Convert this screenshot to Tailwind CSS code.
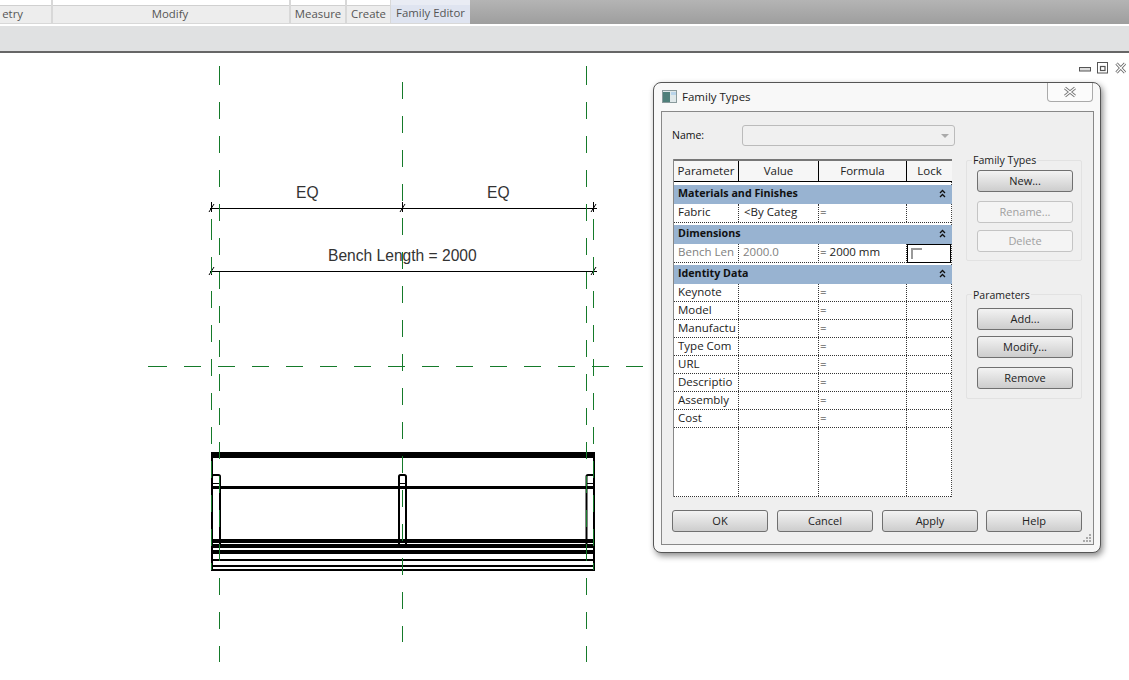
<!DOCTYPE html>
<html lang="en">
<head>
    <meta charset="UTF-8">
    <title>Family Types</title>
    <script src="https://cdn.jsdelivr.net/npm/@tailwindcss/browser@4"></script>
</head>
<body class="bg-white">
<div class="relative w-[1129px] h-[680px] overflow-hidden bg-white font-['Open_Sans',sans-serif] text-[11.5px] text-[#222]">

    <!-- Ribbon panel labels -->
    <div class="flex h-[24px] bg-gradient-to-b from-[#b4b4b4] to-[#9e9e9e] text-[11.4px] text-[#555]">
        <div class="flex gap-[1px] bg-[#d8d8d8]">
            <div class="w-[51px] h-[23px] bg-white"><div class="h-[18px] mt-[5px] pr-[28px] bg-[#ededed] border-t border-[#d0d0d0] text-right leading-[16px]">etry</div></div>
            <div class="w-[236px] h-[23px] ml-[1px] bg-white"><div class="h-[18px] mt-[5px] pr-[2px] bg-[#ededed] border-t border-[#d0d0d0] text-center leading-[16px]">Modify</div></div>
            <div class="w-[54px] h-[23px] ml-[1px] bg-white"><div class="h-[18px] mt-[5px] bg-[#ededed] border-t border-[#d0d0d0] text-center leading-[16px]">Measure</div></div>
            <div class="w-[43px] h-[23px] ml-[1px] bg-white"><div class="h-[18px] mt-[5px] bg-[#ededed] border-t border-[#d0d0d0] text-center leading-[16px]">Create</div></div>
            <div class="w-[79px] h-[23px] bg-[#e9ecf4]"><div class="h-[18px] mt-[5px] bg-[#dfe4f0] text-center leading-[16px]">Family Editor</div></div>
        </div>
    </div>
    <div class="h-[2px] bg-white"></div>
    <div class="h-[27px] bg-[#e0e1e2] border-b-2 border-[#666]"></div>

    <!-- Drawing area -->
    <svg class="absolute left-0 top-0" width="1129" height="680">
        <g stroke="#000" fill="none" shape-rendering="crispEdges">
            <path d="M210 208.5H597"/>
            <path d="M210 271.5H597"/>
        </g>
        <g stroke="#000" fill="none">
            <path d="M209 212L214 204M211.500 202V212"/>
            <path d="M400 212L405 204M402.500 202V212"/>
            <path d="M591 212L596 204M593.500 202V212"/>
            <path d="M209 275L214 267M211.500 258V275"/>
            <path d="M591 275L596 267M593.500 258V275"/>
        </g>
        <g font-family="Liberation Sans, sans-serif" font-size="15.600" fill="#333">
            <text x="296" y="198">EQ</text>
            <text x="487" y="198">EQ</text>
            <text x="328" y="261">Bench Length = 2000</text>
        </g>

        <!-- Bench -->
        <g fill="#000" shape-rendering="crispEdges">
            <rect x="211" y="452" width="384" height="6"/>
            <rect x="211" y="486" width="384" height="3"/>
            <rect x="211" y="539" width="384" height="4"/>
            <rect x="211" y="544" width="384" height="4"/>
            <rect x="211" y="550" width="384" height="4"/>
            <rect x="211" y="559" width="384" height="2"/>
            <rect x="211" y="565" width="384" height="2"/>
            <rect x="211" y="569" width="384" height="2"/>
            <rect x="211" y="452" width="2" height="119"/>
            <rect x="593" y="452" width="2" height="119"/>
            <rect x="211" y="483" width="9" height="1"/>
            <rect x="398" y="483" width="9" height="1"/>
            <rect x="586" y="483" width="8" height="1"/>
        </g>
        <g stroke="#000" stroke-width="2" fill="none">
            <path d="M212 546V476.500a1.500 1.500 0 0 1 1.500-1.500H218.500a1.500 1.500 0 0 1 1.500 1.500V546"/>
            <path d="M399 546V476.500a1.500 1.500 0 0 1 1.500-1.500H404.500a1.500 1.500 0 0 1 1.500 1.500V546"/>
            <path d="M586.500 546V476.500a1.500 1.500 0 0 1 1.500-1.500H594"/>
        </g>

        <!-- Reference planes -->
        <g stroke="#157a2a" fill="none" shape-rendering="crispEdges">
            <path d="M219.500 66V85"/>
            <path d="M586.500 66V85"/>
            <path d="M148 366.500H167"/>
            <g stroke-dasharray="17 17">
                <path d="M219.500 102V662"/>
                <path d="M586.500 102V662"/>
                <path d="M402.500 82V642"/>
                <path d="M211.500 223V570"/>
                <path d="M593.500 223V570"/>
                <path d="M184 366.500H643"/>
            </g>
            <path d="M211.500 219V223"/>
            <path d="M593.500 219V223"/>
        </g>

        <!-- Application window buttons -->
        <g fill="none" stroke="#555">
            <rect x="1079.500" y="67.500" width="11" height="3.500" fill="#ddd"/>
            <rect x="1097.500" y="62.500" width="10" height="10.500"/>
            <rect x="1100.500" y="66.500" width="4.500" height="4" stroke-width="1.200"/>
            <path d="M1116.500 63.500L1125 72.500M1125 63.500L1116.500 72.500" stroke="#666" stroke-width="3"/>
            <path d="M1116.500 63.500L1125 72.500M1125 63.500L1116.500 72.500" stroke="#fff" stroke-width="1.200"/>
        </g>
    </svg>

    <!-- Family Types dialog -->
    <div class="absolute left-[653px] top-[82px] w-[448px] h-[471px] rounded-[8px] border border-[#555] bg-[#f8f8f8] shadow-[2px_3px_6px_rgba(0,0,0,0.45)] px-[7px]">
        <!-- Title bar -->
        <div class="flex items-center h-[28px] pb-[1px]">
            <svg width="15" height="13" class="ml-[1px]">
                <rect x="0.500" y="0.500" width="14" height="12" fill="#dfe8ea" stroke="#8a9a9c"/>
                <rect x="1" y="2" width="7" height="10" fill="#4f7f7a"/>
                <rect x="9" y="2" width="5" height="3" fill="#b9d4ea"/>
            </svg>
            <span class="ml-[5px] text-[11.5px] text-[#222]">Family Types</span>
        </div>
        <div class="absolute right-[7px] top-0 flex items-center justify-center w-[46px] h-[19px] border border-t-0 border-[#aaa] rounded-b-[4px] bg-[#fbfbfb]">
            <svg width="14" height="12">
                <path d="M2 2L12 10M12 2L2 10" fill="none" stroke="#777" stroke-width="3"/>
                <path d="M2 2L12 10M12 2L2 10" fill="none" stroke="#fff" stroke-width="1.200"/>
            </svg>
        </div>

        <!-- Client area -->
        <div class="relative w-[433px] h-[434px] border border-[#888] bg-[#efefef] pl-[10px] pt-[13px]">
            <div class="flex items-center h-[21px]">
                <span class="w-[70px] text-[10.500px] text-[#111]">Name:</span>
                <div class="flex items-center justify-end w-[213px] h-[21px] pr-[5px] border border-[#bbb] rounded-[3px] bg-[#f0f0f0]">
                    <span class="w-0 h-0 border-x-[4px] border-x-transparent border-t-[4px] border-t-[#aaa]"></span>
                </div>
            </div>

            <div class="flex mt-[13px]">
                <!-- Parameter table -->
                <div class="flex flex-col ml-[1px] w-[279px] h-[338px] bg-white border-l border-r border-[#888] border-r-[#444] [border-right-style:dotted]">
                    <div class="grid grid-cols-[65px_80px_88px_45px] -mr-[1px] h-[23px] bg-[#f6f6f6] border-t-2 border-b border-t-[#777] border-b-black text-center leading-[20px]">
                        <div class="border-r border-black">Parameter</div>
                        <div class="border-r border-black">Value</div>
                        <div class="border-r border-black">Formula</div>
                        <div>Lock</div>
                    </div>

                    <div class="flex items-center justify-between -mr-[1px] mt-[3px] h-[19px] pb-[2px] pl-[4px] pr-[6px] bg-[#98b3d1] font-bold text-[10.700px] text-[#111]">
                        <span>Materials and Finishes</span>
                        <svg width="7" height="9"><path d="M1 4L3.500 1.500L6 4M1 8L3.500 5.500L6 8" fill="none" stroke="#111" stroke-width="1.300"/></svg>
                    </div>
                    <div class="grid grid-cols-[65px_80px_88px_44px] h-[19px] leading-[16px] border-b border-dotted border-[#333]">
                        <div class="pl-[4px] border-r border-dotted border-[#333]">Fabric</div>
                        <div class="pl-[5px] border-r border-dotted border-[#333]">&lt;By Categ</div>
                        <div class="pl-[1px] border-r border-dotted border-[#333]">=</div>
                        <div></div>
                    </div>

                    <div class="flex items-center justify-between -mr-[1px] mt-[2px] h-[19px] pb-[2px] pl-[4px] pr-[6px] bg-[#98b3d1] font-bold text-[10.700px] text-[#111]">
                        <span>Dimensions</span>
                        <svg width="7" height="9"><path d="M1 4L3.500 1.500L6 4M1 8L3.500 5.500L6 8" fill="none" stroke="#111" stroke-width="1.300"/></svg>
                    </div>
                    <div class="grid grid-cols-[65px_80px_88px_44px] h-[19px] leading-[16px] border-b border-dotted border-[#333]">
                        <div class="pl-[4px] text-[#808080] whitespace-nowrap overflow-hidden border-r border-dotted border-[#333]">Bench Len</div>
                        <div class="pl-[4px] text-[#808080] border-r border-dotted border-[#333]">2000.0</div>
                        <div class="pl-[1px] border-r border-dotted border-[#333]">= 2000 mm</div>
                        <div class="h-[19px] border border-black pl-[3px] pt-[3px]">
                            <div class="w-[11px] h-[11px] border-l-2 border-t-2 border-[#999]"></div>
                        </div>
                    </div>

                    <div class="flex items-center justify-between -mr-[1px] mt-[2px] h-[19px] pb-[2px] pl-[4px] pr-[6px] bg-[#98b3d1] font-bold text-[10.700px] text-[#111]">
                        <span>Identity Data</span>
                        <svg width="7" height="9"><path d="M1 4L3.500 1.500L6 4M1 8L3.500 5.500L6 8" fill="none" stroke="#111" stroke-width="1.300"/></svg>
                    </div>
                    <div class="grid grid-cols-[65px_80px_88px_44px] h-[18px] leading-[15px] border-b border-dotted border-[#333]">
                        <div class="pl-[4px] border-r border-dotted border-[#333]">Keynote</div>
                        <div class="border-r border-dotted border-[#333]"></div>
                        <div class="pl-[1px] border-r border-dotted border-[#333]">=</div>
                        <div></div>
                    </div>
                    <div class="grid grid-cols-[65px_80px_88px_44px] h-[18px] leading-[15px] border-b border-dotted border-[#333]">
                        <div class="pl-[4px] border-r border-dotted border-[#333]">Model</div>
                        <div class="border-r border-dotted border-[#333]"></div>
                        <div class="pl-[1px] border-r border-dotted border-[#333]">=</div>
                        <div></div>
                    </div>
                    <div class="grid grid-cols-[65px_80px_88px_44px] h-[18px] leading-[15px] border-b border-dotted border-[#333]">
                        <div class="pl-[4px] whitespace-nowrap overflow-hidden border-r border-dotted border-[#333]">Manufactu</div>
                        <div class="border-r border-dotted border-[#333]"></div>
                        <div class="pl-[1px] border-r border-dotted border-[#333]">=</div>
                        <div></div>
                    </div>
                    <div class="grid grid-cols-[65px_80px_88px_44px] h-[18px] leading-[15px] border-b border-dotted border-[#333]">
                        <div class="pl-[4px] whitespace-nowrap overflow-hidden border-r border-dotted border-[#333]">Type Com</div>
                        <div class="border-r border-dotted border-[#333]"></div>
                        <div class="pl-[1px] border-r border-dotted border-[#333]">=</div>
                        <div></div>
                    </div>
                    <div class="grid grid-cols-[65px_80px_88px_44px] h-[18px] leading-[15px] border-b border-dotted border-[#333]">
                        <div class="pl-[4px] border-r border-dotted border-[#333]">URL</div>
                        <div class="border-r border-dotted border-[#333]"></div>
                        <div class="pl-[1px] border-r border-dotted border-[#333]">=</div>
                        <div></div>
                    </div>
                    <div class="grid grid-cols-[65px_80px_88px_44px] h-[18px] leading-[15px] border-b border-dotted border-[#333]">
                        <div class="pl-[4px] whitespace-nowrap overflow-hidden border-r border-dotted border-[#333]">Descriptio</div>
                        <div class="border-r border-dotted border-[#333]"></div>
                        <div class="pl-[1px] border-r border-dotted border-[#333]">=</div>
                        <div></div>
                    </div>
                    <div class="grid grid-cols-[65px_80px_88px_44px] h-[18px] leading-[15px] border-b border-dotted border-[#333]">
                        <div class="pl-[4px] border-r border-dotted border-[#333]">Assembly</div>
                        <div class="border-r border-dotted border-[#333]"></div>
                        <div class="pl-[1px] border-r border-dotted border-[#333]">=</div>
                        <div></div>
                    </div>
                    <div class="grid grid-cols-[65px_80px_88px_44px] h-[18px] leading-[15px] border-b border-dotted border-[#333]">
                        <div class="pl-[4px] border-r border-dotted border-[#333]">Cost</div>
                        <div class="border-r border-dotted border-[#333]"></div>
                        <div class="pl-[1px] border-r border-dotted border-[#333]">=</div>
                        <div></div>
                    </div>
                    <div class="grid grid-cols-[65px_80px_88px_44px] flex-1 border-b border-dotted border-[#333]">
                        <div class="border-r border-dotted border-[#333]"></div>
                        <div class="border-r border-dotted border-[#333]"></div>
                        <div class="border-r border-dotted border-[#333]"></div>
                        <div></div>
                    </div>
                </div>

                <!-- Side groups -->
                <div class="ml-[14px] mt-[1px] w-[116px]">
                    <div class="relative h-[101px] border border-[#e2e2e2] rounded-[2px] pt-[9px] pl-[10px]">
                        <span class="absolute left-[5px] -top-[9px] px-[1px] bg-[#efefef] text-[10.600px] leading-[16px]">Family Types</span>
                        <button class="block w-[96px] h-[22px] border border-[#707070] rounded-[3px] bg-gradient-to-b from-[#f3f3f3] to-[#cdcdcd] text-[11px]">New...</button>
                        <button class="block mt-[9px] w-[96px] h-[22px] border border-[#c4c4c4] rounded-[3px] bg-[#f4f4f4] text-[11px] text-[#a0a0a0]">Rename...</button>
                        <button class="block mt-[7px] w-[96px] h-[22px] border border-[#c4c4c4] rounded-[3px] bg-[#f4f4f4] text-[11px] text-[#a0a0a0]">Delete</button>
                    </div>
                    <div class="relative mt-[33px] h-[105px] border border-[#e2e2e2] rounded-[2px] pt-[13px] pl-[10px]">
                        <span class="absolute left-[5px] -top-[8px] px-[1px] bg-[#efefef] text-[10.500px] leading-[16px]">Parameters</span>
                        <button class="block w-[96px] h-[22px] border border-[#707070] rounded-[3px] bg-gradient-to-b from-[#f3f3f3] to-[#cdcdcd] text-[11px]">Add...</button>
                        <button class="block mt-[6px] w-[96px] h-[22px] border border-[#707070] rounded-[3px] bg-gradient-to-b from-[#f3f3f3] to-[#cdcdcd] text-[11px]">Modify...</button>
                        <button class="block mt-[9px] w-[96px] h-[22px] border border-[#707070] rounded-[3px] bg-gradient-to-b from-[#f3f3f3] to-[#cdcdcd] text-[11px]">Remove</button>
                    </div>
                </div>
            </div>

            <!-- Dialog buttons -->
            <div class="flex mt-[13px] text-[11px]">
                <button class="w-[96px] h-[22px] border border-[#707070] rounded-[3px] bg-gradient-to-b from-[#f3f3f3] to-[#cdcdcd]">OK</button>
                <button class="ml-[9px] w-[96px] h-[22px] border border-[#707070] rounded-[3px] bg-gradient-to-b from-[#f3f3f3] to-[#cdcdcd]">Cancel</button>
                <button class="ml-[9px] w-[96px] h-[22px] border border-[#707070] rounded-[3px] bg-gradient-to-b from-[#f3f3f3] to-[#cdcdcd]">Apply</button>
                <button class="ml-[8px] w-[96px] h-[22px] border border-[#707070] rounded-[3px] bg-gradient-to-b from-[#f3f3f3] to-[#cdcdcd]">Help</button>
            </div>
            <svg width="9" height="9" class="absolute right-[1px] bottom-[1px]" fill="#aaa">
                <rect x="6" y="0" width="2" height="2"/><rect x="3" y="3" width="2" height="2"/><rect x="6" y="3" width="2" height="2"/><rect x="0" y="6" width="2" height="2"/><rect x="3" y="6" width="2" height="2"/><rect x="6" y="6" width="2" height="2"/>
            </svg>
        </div>
    </div>
</div>
</body>
</html>
